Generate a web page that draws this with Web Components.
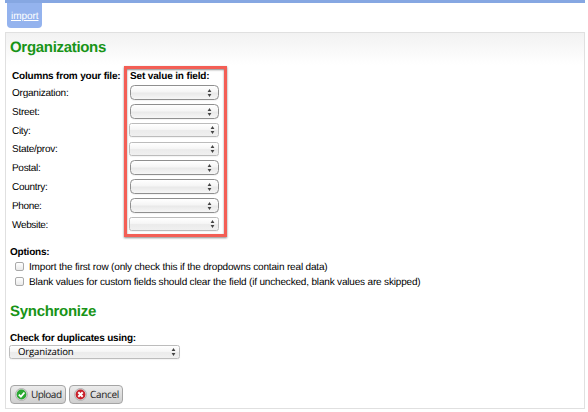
<!DOCTYPE html>
<html lang="en">
<head>
<meta charset="utf-8">
<title>Import</title>
<style>
html,body{margin:0;background:#fff;width:588px;height:412px;overflow:hidden}
body{font:10px/12px "Liberation Sans",Arial,sans-serif;color:#000}
</style>
</head>
<body>
<import-page></import-page>
<script>
class Base extends HTMLElement {
  constructor() {
    super();
    this.attachShadow({mode: 'open'}).innerHTML = this.view();
  }
}

/* A line of text spread by letter spacing to the width given in "w". */
customElements.define('fit-text', class extends Base {
  view() {
    return `<style>:host{display:block;width:max-content;white-space:nowrap;text-rendering:geometricPrecision;padding-top:var(--drop,1px);margin-bottom:calc(-1*var(--drop,1px))}</style><slot></slot>`;
  }
  connectedCallback() {
    const want = +this.getAttribute('w');
    const n = this.textContent.length;
    const have = this.getBoundingClientRect().width;
    if (want && have) this.style.letterSpacing = ((want - have) / n).toFixed(3) + 'px';
  }
});

customElements.define('nav-tab', class extends Base {
  view() {
    return `<style>
      :host{display:block;width:35px;height:25px;background:#94b3ee;border-radius:0 0 4px 4px;box-sizing:border-box;padding:7px 0 0 4px;color:#fff;text-decoration:underline}
    </style><slot></slot>`;
  }
});

customElements.define('drop-down', class extends Base {
  view() {
    return `<style>
      :host{--drop:0px;display:flex;box-sizing:border-box;width:90px;height:14px;align-items:center;justify-content:space-between;border:1px solid #bcbcbc;border-radius:2.5px;background:linear-gradient(#fff,#f6f6f6 45%,#ebebeb 55%,#f0f0f0);padding:0 3.5px 0 8px;box-shadow:0 1px 1px #0000000d}
      :host([rounded]){width:89px;height:15px;margin-left:1px;border-color:#8f8f8f;border-radius:4.5px;padding-right:6px;background:linear-gradient(#fff,#f5f5f5 45%,#e9e9e9 55%,#f6f6f6)}
      svg{display:block;flex:none}
    </style><span><slot></slot></span>
    <svg width="5" height="8" viewBox="0 0 5 8" fill="#444"><path d="M.6 3 2.5 0l1.9 3zM.6 5h3.8L2.5 8z"/></svg>`;
  }
});

customElements.define('field-row', class extends Base {
  view() {
    return `<style>
      :host{display:grid;grid-template-columns:117px 90px;height:19px;align-items:start}
      :host([short]){height:18px}
      slot[name=label]{display:block;padding-top:2px}
      :host([short]) slot[name=label]{padding-top:1px}
    </style><slot name="label"></slot><slot></slot>`;
  }
});

customElements.define('check-line', class extends Base {
  view() {
    return `<style>
      :host{display:flex;height:15px;gap:5px;align-items:center}
      i{width:9px;height:9px;box-sizing:border-box;border:1px solid #a9a9a9;border-radius:2px;background:linear-gradient(#fff,#eaeaea)}
    </style><i></i><slot></slot>`;
  }
});

customElements.define('action-button', class extends Base {
  view() {
    return `<style>
      :host{--drop:0px;display:flex;box-sizing:border-box;height:19px;align-items:center;gap:3px;padding:0 0 0 4px;border:1px solid #a5a5a5;border-radius:4px;background:linear-gradient(#ececec,#cfcfcf);color:#222;font:500 10px/13px "Open Sans",sans-serif}
      svg{display:block;flex:none}
      slot{display:block;margin-top:-1px}
      .no,:host([kind=cancel]) .ok{display:none}
      :host([kind=cancel]) .no{display:block}
    </style>
    <svg width="13" height="13" viewBox="0 0 13 13">
      <circle cx="6.5" cy="6.5" r="6" fill="#ddd" stroke="#aaa" stroke-width=".8"/>
      <g class="ok"><circle cx="6.5" cy="6.5" r="4.9" fill="#2aa832"/><path d="M3.8 6.7 5.9 8.7 9.4 4.5" fill="none" stroke="#fff" stroke-width="1.8"/></g>
      <g class="no"><circle cx="6.5" cy="6.5" r="4.9" fill="#c8202a"/><path d="m4.3 4.3 4.4 4.4m0-4.4L4.3 8.7" fill="none" stroke="#fff" stroke-width="2"/></g>
    </svg><slot></slot>`;
  }
});

customElements.define('section-title', class extends Base {
  view() {
    return `<style>:host{display:block;font:bold 15px/18px "Liberation Sans",Arial,sans-serif;color:#189417}</style><slot></slot>`;
  }
});

customElements.define('form-panel', class extends Base {
  view() {
    return `<style>:host{display:flex;flex-direction:column;box-sizing:border-box;width:580px;height:377px;border:1px solid #e0e0e0;background:linear-gradient(#f2f2f2,#fff 32px);padding:5px 0 0 4px}</style><slot></slot>`;
  }
});

/* Red frame laid over the column of drop-downs. */
customElements.define('mark-frame', class extends Base {
  view() {
    return `<style>:host{position:absolute;left:124px;top:66px;box-sizing:border-box;width:103px;height:171px;border:3px solid #f35e55;box-shadow:0 1px 2px #0007,inset 0 1px 2px #0007}</style>`;
  }
});

customElements.define('import-page', class extends Base {
  view() {
    const rows = [['Organization:',56.5,1],['Street:',27.5,1],['City:',18.5,0],['State/prov:',45.5,0],['Postal:',28.5,1],['Country:',35.5,1],['Phone:',29.5,1],['Website:',36,0]];
    return `<style>
      :host{display:block;position:relative;padding-left:5px;height:412px}
      .bar{width:580px;height:3px;background:#86a7e2}
      nav{height:29px;padding-left:2px}
      b{display:flow-root}
      .head{display:grid;grid-template-columns:118px auto;padding:14px 0 0 2px;height:15px}
      .rows{padding-left:2px}
      .opts{padding-top:10px;height:12px}
      .checks{padding:1px 0 0 5px}
      section-title{height:18px}
      .sync{padding-top:13px}
      .dup{padding-top:12px}
      .dup drop-down{width:171px;margin-left:-1px;margin-top:1px;font:500 9.6px/12px "Open Sans",sans-serif}
      .buttons{display:flex;gap:3px;padding-top:26px}
    </style>
    <div class="bar"></div>
    <nav><nav-tab><fit-text w="27.5">import</fit-text></nav-tab></nav>
    <form-panel>
      <section-title><fit-text w="96">Organizations</fit-text></section-title>
      <div class="head"><b><fit-text w="108.5">Columns from your file:</fit-text></b><b><fit-text w="79.5">Set value in field:</fit-text></b></div>
      <div class="rows">${rows.map(([t,w,r],i)=>`<field-row ${i===3?'short':''}><fit-text slot="label" w="${w}">${t}</fit-text><drop-down ${r?'rounded':''}></drop-down></field-row>`).join('')}</div>
      <b class="opts"><fit-text w="39.5">Options:</fit-text></b>
      <div class="checks">
        <check-line><fit-text w="298.5">Import the first row (only check this if the dropdowns contain real data)</fit-text></check-line>
        <check-line><fit-text w="391.5">Blank values for custom fields should clear the field (if unchecked, blank values are skipped)</fit-text></check-line>
      </div>
      <section-title class="sync"><fit-text w="86">Synchronize</fit-text></section-title>
      <b class="dup"><fit-text w="126">Check for duplicates using:</fit-text><drop-down><fit-text w="55.5">Organization</fit-text></drop-down></b>
      <div class="buttons">
        <action-button style="width:56px"><fit-text w="30.5">Upload</fit-text></action-button>
        <action-button kind="cancel" style="width:54px"><fit-text w="29">Cancel</fit-text></action-button>
      </div>
    </form-panel>
    <mark-frame></mark-frame>`;
  }
});
</script>
</body>
</html>
